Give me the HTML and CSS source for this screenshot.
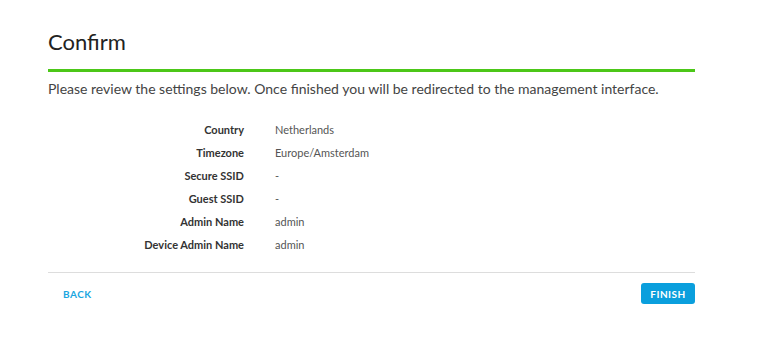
FILE: index.html
```html
<!DOCTYPE html>
<html lang="en">

<head>
    <meta charset="UTF-8">
    <meta name="viewport" content="width=device-width, initial-scale=1.0">
    <title>Confirm</title>
    <link rel="stylesheet" href="styles.css">
</head>

<body>

    <div class="wizard">
        <h1>Confirm</h1>
        <div class="progress"></div>
        <p class="intro">Please review the settings below. Once finished you will be redirected to the management interface.</p>

        <dl class="summary">
            <dt>Country</dt>
            <dd>Netherlands</dd>
            <dt>Timezone</dt>
            <dd>Europe/Amsterdam</dd>
            <dt>Secure SSID</dt>
            <dd>-</dd>
            <dt>Guest SSID</dt>
            <dd>-</dd>
            <dt>Admin Name</dt>
            <dd>admin</dd>
            <dt>Device Admin Name</dt>
            <dd>admin</dd>
        </dl>

        <div class="footer">
            <button class="btn-link">BACK</button>
            <button class="btn-primary">FINISH</button>
        </div>
    </div>

</body>

</html>
```

FILE: styles.css
```css
body {
    font-family: Lato, "Open Sans", sans-serif;
    background-color: #ffffff;
    color: #333333;
    margin: 0;
}

.wizard {
    width: 647px;
    margin-left: 48px;
    padding-top: 28px;
}

h1 {
    font-size: 22px;
    font-weight: 400;
    color: #222222;
    margin: 0;
    line-height: 28px;
}

.progress {
    height: 3px;
    background-color: #4cc718;
    margin-top: 13px;
}

.intro {
    font-size: 14px;
    color: #444444;
    margin: 7px 0 0 0;
    line-height: 20px;
}

.summary {
    display: grid;
    grid-template-columns: 196px 1fr;
    column-gap: 31px;
    row-gap: 7px;
    margin: 23px 0 0 0;
    font-size: 11px;
    line-height: 16px;
}

.summary dt {
    text-align: right;
    font-weight: 700;
    color: #333333;
}

.summary dd {
    margin: 0;
    color: #555555;
}

.footer {
    border-top: 1px solid #dddddd;
    margin-top: 19px;
    padding-top: 10px;
    display: flex;
    justify-content: space-between;
    align-items: center;
}

button {
    font-family: Lato, "Open Sans", sans-serif;
    font-size: 10px;
    font-weight: 700;
    letter-spacing: 0.5px;
    border: none;
    cursor: pointer;
}

.btn-link {
    background: none;
    color: #1ba6e0;
    padding: 0 15px;
    height: 21px;
}

.btn-primary {
    background-color: #0a9fdd;
    color: #ffffff;
    border-radius: 3px;
    height: 21px;
    padding: 0 9px;
    width: 54px;
}
```
